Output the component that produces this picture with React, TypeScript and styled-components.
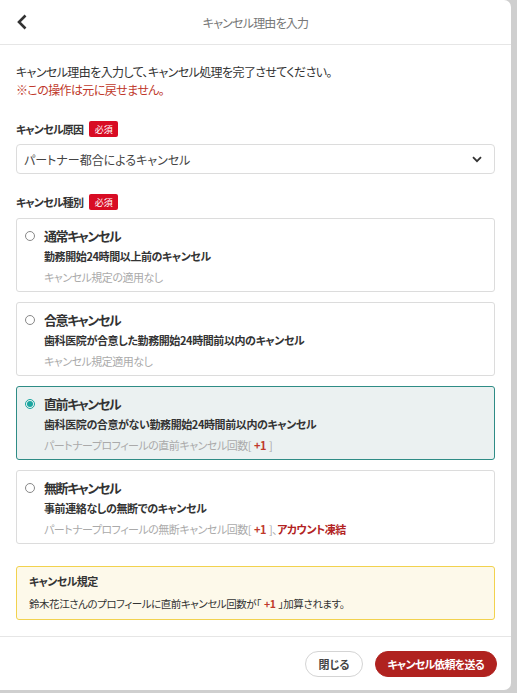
import React, { useState } from "react";
import styled, { createGlobalStyle } from "styled-components";

const GlobalStyle = createGlobalStyle`
  html, body {
    margin: 0;
    padding: 0;
    background: #cfcfcf;
  }
  body {
    font-family: "Noto Sans CJK JP", "Noto Sans", sans-serif;
    font-feature-settings: "palt";
    color: #333;
  }
`;

const Page = styled.div`
  width: 517px;
  height: 693px;
  box-sizing: border-box;
  padding-right: 6px;
`;

const Modal = styled.div`
  width: 511px;
  height: 690px;
  background: #fff;
  border-radius: 0 7px 7px 0;
  display: flex;
  flex-direction: column;
`;

const Header = styled.div`
  flex-shrink: 0;
  height: 44px;
  border-bottom: 1px solid #e6e6e6;
  display: flex;
  align-items: center;
  position: relative;
  justify-content: center;
`;

const BackButton = styled.button`
  position: absolute;
  left: 12px;
  top: 10px;
  width: 20px;
  height: 24px;
  border: none;
  background: none;
  padding: 0;
  display: flex;
  align-items: center;
  justify-content: center;
  cursor: pointer;
`;

const Title = styled.div`
  font-size: 12px;
  letter-spacing: -0.8px;
  color: #777;
`;

const Body = styled.div`
  flex: 1;
  padding: 18px 16px 0;
  display: flex;
  flex-direction: column;
`;

const Intro = styled.p`
  margin: 0;
  font-size: 12px;
  letter-spacing: -0.6px;
  line-height: 18px;
  color: #333;
`;

const Warn = styled.span`
  display: block;
  color: #c0392b;
`;

const Label = styled.div<{ $top: number }>`
  margin-top: ${(p) => p.$top}px;
  display: flex;
  align-items: center;
  gap: 6px;
  font-size: 11px;
  letter-spacing: -0.8px;
  font-weight: 700;
  color: #333;
  height: 18px;
`;

const Required = styled.span`
  background: #d80c24;
  color: #fff;
  font-size: 9px;
  font-weight: 400;
  letter-spacing: 0;
  border-radius: 2px;
  width: 29px;
  height: 16px;
  display: inline-flex;
  align-items: center;
  justify-content: center;
`;

const Select = styled.div`
  margin-top: 6px;
  height: 28px;
  border: 1px solid #dcdcdc;
  border-radius: 4px;
  display: flex;
  align-items: center;
  justify-content: space-between;
  padding: 0 12px 0 7px;
  font-size: 12px;
  color: #444;
`;

const Options = styled.div`
  margin-top: 7px;
  display: flex;
  flex-direction: column;
  gap: 10px;
`;

const Card = styled.label<{ $active: boolean }>`
  height: 74px;
  box-sizing: border-box;
  border: 1px solid ${(p) => (p.$active ? "#2f8c86" : "#dcdcdc")};
  background: ${(p) => (p.$active ? "#ebf1f1" : "#fff")};
  border-radius: 3px;
  padding: 7px 12px 0 8px;
  display: grid;
  grid-template-columns: 14px 1fr;
  column-gap: 5px;
  cursor: pointer;
`;

const Radio = styled.span<{ $active: boolean }>`
  margin-top: 5px;
  width: 10px;
  height: 10px;
  border-radius: 50%;
  box-sizing: border-box;
  border: 1px solid ${(p) => (p.$active ? "#1aa5a0" : "#888")};
  display: flex;
  align-items: center;
  justify-content: center;
  &::after {
    content: "";
    width: 6px;
    height: 6px;
    border-radius: 50%;
    background: ${(p) => (p.$active ? "#1aa5a0" : "transparent")};
  }
`;

const CardText = styled.div`
  display: flex;
  flex-direction: column;
`;

const CardTitle = styled.div`
  font-size: 13px;
  font-weight: 700;
  letter-spacing: -1.4px;
  line-height: 20px;
  color: #333;
`;

const CardDesc = styled.div`
  margin-top: 1px;
  font-size: 11px;
  font-weight: 700;
  letter-spacing: -0.4px;
  line-height: 18px;
  color: #333;
`;

const CardNote = styled.div`
  margin-top: 3px;
  font-size: 11px;
  letter-spacing: -0.5px;
  line-height: 18px;
  color: #aaa;
`;

const Plus = styled.span`
  color: #c0392b;
  font-weight: 700;
  padding: 0 3px;
`;

const Lock = styled.span`
  color: #b22222;
  font-weight: 700;
`;

const Notice = styled.div`
  margin-top: 22px;
  background: #fdf9ea;
  border: 1px solid #f2d24e;
  border-radius: 3px;
  padding: 5px 12px 6px;
`;

const NoticeTitle = styled.div`
  font-size: 11px;
  font-weight: 700;
  letter-spacing: -0.6px;
  line-height: 18px;
  color: #333;
`;

const NoticeText = styled.div`
  margin-top: 5px;
  font-size: 10.5px;
  letter-spacing: -0.45px;
  line-height: 18px;
  color: #333;
`;

const Footer = styled.div`
  flex-shrink: 0;
  border-top: 1px solid #e6e6e6;
  padding: 14px 14px 13px;
  display: flex;
  justify-content: flex-end;
  gap: 12px;
`;

const Button = styled.button<{ $primary?: boolean }>`
  height: 26px;
  border-radius: 13px;
  padding: 0 12px;
  font-family: inherit;
  font-feature-settings: "palt";
  font-size: 11px;
  font-weight: 700;
  letter-spacing: ${(p) => (p.$primary ? -0.8 : 0)}px;
  border: 1px solid ${(p) => (p.$primary ? "#b0221f" : "#d4d4d4")};
  background: ${(p) => (p.$primary ? "#b0221f" : "#fff")};
  color: ${(p) => (p.$primary ? "#fff" : "#444")};
  cursor: pointer;
`;

type Kind = {
  id: string;
  title: string;
  desc: string;
  note: React.ReactNode;
};

const kinds: Kind[] = [
  {
    id: "normal",
    title: "通常キャンセル",
    desc: "勤務開始24時間以上前のキャンセル",
    note: "キャンセル規定の適用なし",
  },
  {
    id: "agreed",
    title: "合意キャンセル",
    desc: "歯科医院が合意した勤務開始24時間前以内のキャンセル",
    note: "キャンセル規定適用なし",
  },
  {
    id: "late",
    title: "直前キャンセル",
    desc: "歯科医院の合意がない勤務開始24時間前以内のキャンセル",
    note: (
      <>
        パートナープロフィールの直前キャンセル回数[<Plus>+1</Plus>]
      </>
    ),
  },
  {
    id: "noshow",
    title: "無断キャンセル",
    desc: "事前連絡なしの無断でのキャンセル",
    note: (
      <>
        パートナープロフィールの無断キャンセル回数[<Plus>+1</Plus>]、<Lock>アカウント凍結</Lock>
      </>
    ),
  },
];

export default function App() {
  const [selected, setSelected] = useState("late");

  return (
    <Page>
      <GlobalStyle />
      <Modal>
        <Header>
          <BackButton aria-label="戻る">
            <svg width="12" height="16" viewBox="0 0 12 16">
              <path d="M9.5 1.5 L3 8 L9.5 14.5" fill="none" stroke="#333" strokeWidth="2.6" />
            </svg>
          </BackButton>
          <Title>キャンセル理由を入力</Title>
        </Header>
        <Body>
          <Intro>
            キャンセル理由を入力して、キャンセル処理を完了させてください。
            <Warn>※この操作は元に戻せません。</Warn>
          </Intro>

          <Label $top={21}>
            キャンセル原因<Required>必須</Required>
          </Label>
          <Select>
            パートナー都合によるキャンセル
            <svg width="10" height="7" viewBox="0 0 10 7">
              <path d="M1 1.2 L5 5.2 L9 1.2" fill="none" stroke="#333" strokeWidth="1.8" />
            </svg>
          </Select>

          <Label $top={19}>
            キャンセル種別<Required>必須</Required>
          </Label>
          <Options>
            {kinds.map((k) => (
              <Card key={k.id} $active={selected === k.id} onClick={() => setSelected(k.id)}>
                <Radio $active={selected === k.id} />
                <CardText>
                  <CardTitle>{k.title}</CardTitle>
                  <CardDesc>{k.desc}</CardDesc>
                  <CardNote>{k.note}</CardNote>
                </CardText>
              </Card>
            ))}
          </Options>

          <Notice>
            <NoticeTitle>キャンセル規定</NoticeTitle>
            <NoticeText>
              鈴木花江さんのプロフィールに直前キャンセル回数が「<Plus>+1</Plus>」加算されます。
            </NoticeText>
          </Notice>
        </Body>
        <Footer>
          <Button>閉じる</Button>
          <Button $primary>キャンセル依頼を送る</Button>
        </Footer>
      </Modal>
    </Page>
  );
}
